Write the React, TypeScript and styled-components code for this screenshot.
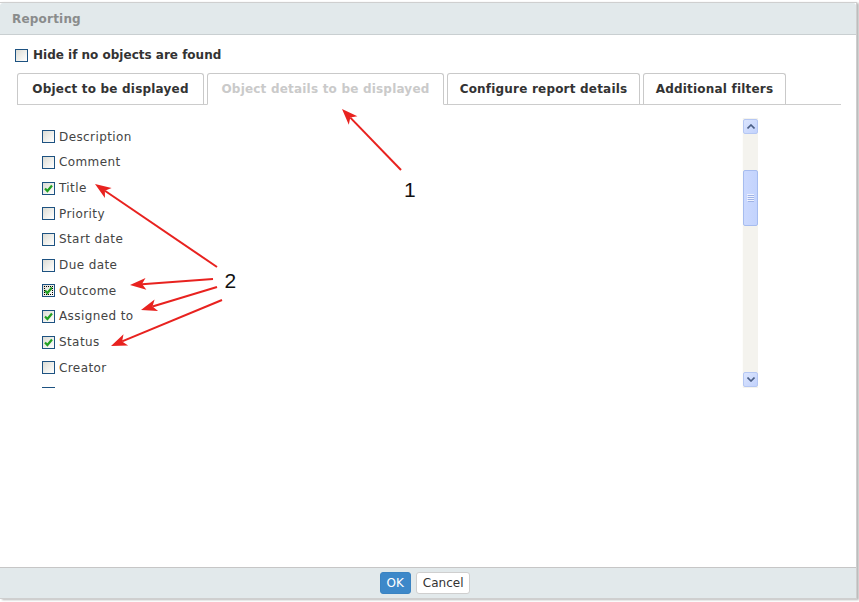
import React from "react";
import styled, { createGlobalStyle } from "styled-components";

const GlobalStyle = createGlobalStyle`
  html, body { margin: 0; padding: 0; background: #ffffff; }
  body { font-family: "DejaVu Sans", Verdana, sans-serif; }
  * { box-sizing: border-box; }
`;

const Page = styled.div`
  position: relative;
  width: 859px;
  height: 602px;
  padding-top: 2px;
  overflow: hidden;
`;

const Dialog = styled.div`
  width: 857px;
  height: 597px;
  display: flex;
  flex-direction: column;
  border: 1px solid #cfcfcf;
  border-left: none;
  box-shadow: 2px 1px 2px rgba(0, 0, 0, 0.28);
  background: #fff;
`;

const Header = styled.div`
  height: 32px;
  flex: none;
  display: flex;
  align-items: center;
  padding-left: 12px;
  background: #e2e9eb;
  border-bottom: 1px solid #c9cfd1;
  border-radius: 3px 3px 0 0;
  font-size: 12px;
  font-weight: bold;
  color: #8a8c8c;
  letter-spacing: 0.2px;
`;

const Body = styled.div`
  flex: 1;
  display: flex;
  flex-direction: column;
`;

const HideRow = styled.label`
  display: flex;
  align-items: center;
  gap: 5px;
  height: 16px;
  margin: 12px 0 0 15px;
  font-size: 12px;
  font-weight: bold;
  color: #333;
  letter-spacing: 0;
`;

const Tabs = styled.div`
  display: flex;
  align-items: flex-end;
  gap: 3px;
  height: 32px;
  margin: 10px 0 0 17px;
  width: 824px;
  border-bottom: 1px solid #cccccc;
`;

const Tab = styled.div<{ $active?: boolean; $w: number }>`
  height: ${(p) => (p.$active ? "32px" : "31px")};
  margin-bottom: ${(p) => (p.$active ? "-1px" : "0")};
  display: flex;
  align-items: center;
  padding: ${(p) => (p.$active ? "0 0 1px 0" : "0")};
  justify-content: center;
  width: ${(p) => p.$w}px;
  border: 1px solid #c9c9c9;
  border-bottom: ${(p) => (p.$active ? "1px solid #fff" : "none")};
  border-radius: 3px 3px 0 0;
  background: #fff;
  font-size: 12px;
  font-weight: bold;
  letter-spacing: 0.2px;
  color: ${(p) => (p.$active ? "#cacaca" : "#333")};
`;

const ListArea = styled.div`
  display: flex;
  width: 728px;
  height: 270px;
  margin: 13px 0 0 30px;
`;

const List = styled.div`
  flex: 1;
  overflow: hidden;
  padding: 6px 0 0 12px;
`;

const Row = styled.div`
  height: 25.67px;
  display: flex;
  align-items: center;
  gap: 4px;
  font-size: 12px;
  letter-spacing: 0.4px;
  color: #444;
`;

const Box = styled.span<{ $focus?: boolean }>`
  position: relative;
  width: 13px;
  height: 13px;
  flex: none;
  border: 1px solid #1d5281;
  background: linear-gradient(135deg, #dcdcd5 0%, #f2f2ee 60%, #ffffff 100%);
  display: flex;
  align-items: center;
  justify-content: center;
  outline: ${(p) => (p.$focus ? "1px dotted #000" : "none")};
  outline-offset: ${(p) => (p.$focus ? "-3px" : "0")};
`;

const Scrollbar = styled.div`
  width: 16px;
  flex: none;
  display: flex;
  flex-direction: column;
  background: #f4f3ee;
  border-left: 1px solid #fdfdfb;
  padding: 1px 1px 1px 0;
`;

const SbButton = styled.div`
  width: 15px;
  height: 15px;
  flex: none;
  border: 1px solid #b5c7f3;
  border-radius: 2px;
  background: linear-gradient(135deg, #dbe5fe 0%, #c2d2fc 100%);
  display: flex;
  align-items: center;
  justify-content: center;
`;

const SbTrack = styled.div`
  flex: 1;
  display: flex;
  flex-direction: column;
  padding-top: 36px;
`;

const SbThumb = styled.div`
  width: 15px;
  height: 56px;
  border: 1px solid #a6bcef;
  border-radius: 2px;
  background: linear-gradient(90deg, #cbd9fe 0%, #c3d3fd 100%);
  display: flex;
  align-items: center;
  justify-content: center;
`;

const Footer = styled.div`
  height: 31px;
  flex: none;
  display: flex;
  align-items: center;
  justify-content: center;
  gap: 5px;
  padding-right: 6px;
  background: #e2e9eb;
  border-top: 1px solid #c6c6c6;
`;

const Button = styled.button<{ $primary?: boolean }>`
  height: 22px;
  padding: 0 6px;
  font-family: "DejaVu Sans", Verdana, sans-serif;
  font-size: 12px;
  border-radius: 3px;
  border: 1px solid ${(p) => (p.$primary ? "#3a83c2" : "#cfcfcf")};
  background: ${(p) => (p.$primary ? "#3d88c9" : "#ffffff")};
  color: ${(p) => (p.$primary ? "#ffffff" : "#333333")};
  min-width: ${(p) => (p.$primary ? "30px" : "54px")};
`;

const Overlay = styled.svg`
  position: absolute;
  left: 0;
  top: 0;
  pointer-events: none;
`;

const Check = () => (
  <svg width="9" height="9" viewBox="0 0 9 9">
    <path d="M1 4.5 L3.4 7 L8 1.5" fill="none" stroke="#22a022" strokeWidth="2.2" />
  </svg>
);

const CheckBox = ({ checked, focus }: { checked?: boolean; focus?: boolean }) => (
  <Box $focus={focus}>{checked ? <Check /> : null}</Box>
);

const items: { label: string; checked?: boolean; focus?: boolean }[] = [
  { label: "Description" },
  { label: "Comment" },
  { label: "Title", checked: true },
  { label: "Priority" },
  { label: "Start date" },
  { label: "Due date" },
  { label: "Outcome", checked: true, focus: true },
  { label: "Assigned to", checked: true },
  { label: "Status", checked: true },
  { label: "Creator" },
  { label: "" },
];

const tabs = [
  { label: "Object to be displayed", w: 187 },
  { label: "Object details to be displayed", w: 237, active: true },
  { label: "Configure report details", w: 193 },
  { label: "Additional filters", w: 143 },
];

function arrow(x1: number, y1: number, x2: number, y2: number, key: string) {
  const dx = x2 - x1;
  const dy = y2 - y1;
  const len = Math.hypot(dx, dy);
  const ux = dx / len;
  const uy = dy / len;
  const px = -uy;
  const py = ux;
  const hl = 16;
  const hw = 6;
  const bx = x2 - ux * hl;
  const by = y2 - uy * hl;
  const nx = x2 - ux * (hl - 4);
  const ny = y2 - uy * (hl - 4);
  const pts = [
    [x2, y2],
    [bx + px * hw, by + py * hw],
    [nx, ny],
    [bx - px * hw, by - py * hw],
  ]
    .map((p) => p.map((v) => v.toFixed(1)).join(","))
    .join(" ");
  return (
    <g key={key}>
      <line x1={x1} y1={y1} x2={nx} y2={ny} stroke="#e8221f" strokeWidth={2} />
      <polygon points={pts} fill="#e8221f" />
    </g>
  );
}

export default function App() {
  return (
    <>
      <GlobalStyle />
      <Page>
        <Dialog>
          <Header>Reporting</Header>
          <Body>
            <HideRow>
              <CheckBox />
              Hide if no objects are found
            </HideRow>
            <Tabs>
              {tabs.map((t) => (
                <Tab key={t.label} $active={t.active} $w={t.w}>
                  {t.label}
                </Tab>
              ))}
            </Tabs>
            <ListArea>
              <List>
                {items.map((it, i) => (
                  <Row key={i}>
                    <CheckBox checked={it.checked} focus={it.focus} />
                    {it.label}
                  </Row>
                ))}
              </List>
              <Scrollbar>
                <SbButton>
                  <svg width="8" height="5" viewBox="0 0 8 5">
                    <path d="M0.5 4.5 L4 1 L7.5 4.5" fill="none" stroke="#4b5f86" strokeWidth="1.6" />
                  </svg>
                </SbButton>
                <SbTrack>
                  <SbThumb>
                    <svg width="7" height="8" viewBox="0 0 7 8">
                      <path d="M0 0.5 H7 M0 2.5 H7 M0 4.5 H7 M0 6.5 H7" stroke="#eef2fe" strokeWidth="1" />
                      <path d="M1 1.5 H7 M1 3.5 H7 M1 5.5 H7 M1 7.5 H7" stroke="#9fb3e6" strokeWidth="1" />
                    </svg>
                  </SbThumb>
                </SbTrack>
                <SbButton>
                  <svg width="8" height="5" viewBox="0 0 8 5">
                    <path d="M0.5 0.5 L4 4 L7.5 0.5" fill="none" stroke="#4b5f86" strokeWidth="1.6" />
                  </svg>
                </SbButton>
              </Scrollbar>
            </ListArea>
          </Body>
          <Footer>
            <Button $primary>OK</Button>
            <Button>Cancel</Button>
          </Footer>
        </Dialog>
        <Overlay width="859" height="602" viewBox="0 0 859 602">
          {arrow(401, 170, 342, 109, "a1")}
          {arrow(217, 267, 95, 184, "a2")}
          {arrow(213, 279, 130, 285, "a3")}
          {arrow(217, 287, 141, 310, "a4")}
          {arrow(222, 300, 111, 346, "a5")}
          <text x="404" y="197" fontFamily="Liberation Sans, Arial, sans-serif" fontSize="21" fill="#111">
            1
          </text>
          <text x="224.5" y="288" fontFamily="Liberation Sans, Arial, sans-serif" fontSize="21" fill="#111">
            2
          </text>
        </Overlay>
      </Page>
    </>
  );
}
